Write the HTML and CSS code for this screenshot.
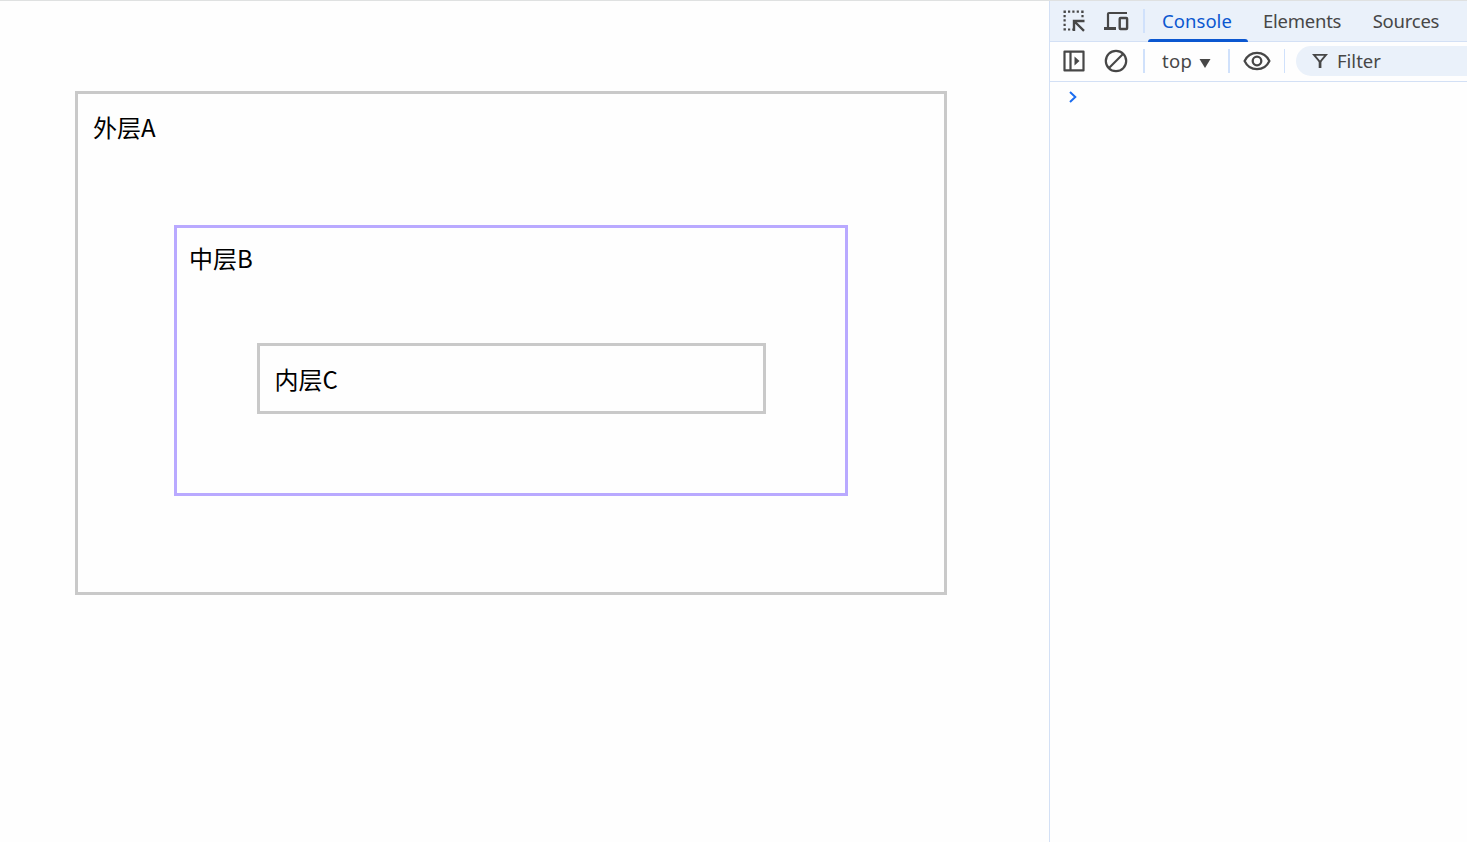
FILE: index.html
```html
<!DOCTYPE html>
<html lang="zh-CN">
<head>
    <meta charset="UTF-8">
    <meta name="viewport" content="width=device-width, initial-scale=1.0">
    <title>外层A 中层B 内层C</title>
    <link rel="stylesheet" href="styles.css">
</head>
<body>
    <!-- Page -->
    <main class="page">
        <div class="box outer">
            <span class="label">外层A</span>
            <div class="box middle">
                <span class="label">中层B</span>
                <div class="box inner">
                    <span class="label">内层C</span>
                </div>
            </div>
        </div>
    </main>

    <!-- Devtools -->
    <aside class="devtools">
        <div class="tabs">
            <svg width="24" height="24" viewBox="0 0 24 24">
                <path d="M1.5 1.5h2.4v2.4H1.5zM6 1.5h2.2v2.2H6zM10.3 1.5h2.2v2.2h-2.2zM14.7 1.5h2.2v2.2h-2.2zM19.2 1.5h2.4v2.4h-2.4zM1.5 6h2.2v2.2H1.5zM1.5 10.3h2.2v2.2H1.5zM1.5 14.7h2.2v2.2H1.5zM1.5 19.2h2.4v2.4H1.5zM6 19.4h2.2v2.2H6zM10.3 19.4h2.2v2.2h-2.2zM19.4 6h2.2v2.2h-2.2z" fill="#474747"/>
                <path d="M12 22V12h10.5M12.500 12.500l9.500 9.300" fill="none" stroke="#474747" stroke-width="2.4"/>
            </svg>
            <svg class="device" width="26" height="24" viewBox="0 0 26 24">
                <path d="M5 19V5q0-1 1-1h18" fill="none" stroke="#474747" stroke-width="2.2"/>
                <path d="M1 18h12v3H1z" fill="#474747"/>
                <rect x="16.700" y="9" width="7.400" height="11" rx=".8" fill="none" stroke="#474747" stroke-width="2.400"/>
            </svg>
            <span class="divider"></span>
            <span class="tab active">Console</span>
            <span class="tab">Elements</span>
            <span class="tab">Sources</span>
        </div>
        <div class="toolbar">
            <svg width="24" height="24" viewBox="0 0 24 24">
                <path d="M2.5 2.6h19v18.8h-19zM8.5 3v18" fill="none" stroke="#474747" stroke-width="2.2" stroke-linejoin="round"/>
                <path d="M12.5 7.5l5 4.5-5 4.5z" fill="#474747"/>
            </svg>
            <svg class="clear" width="24" height="24" viewBox="0 0 24 24">
                <circle cx="12" cy="12" r="10.2" fill="none" stroke="#474747" stroke-width="2.2"/>
                <path d="M5 19L19 5" stroke="#474747" stroke-width="2.2"/>
            </svg>
            <span class="divider"></span>
            <span class="context">top</span>
            <svg class="arrow" width="12" height="9" viewBox="0 0 12 9">
                <path d="M.5 0h11L6 9z" fill="#474747"/>
            </svg>
            <span class="divider after-context"></span>
            <svg class="eye" width="28" height="20" viewBox="0 0 28 20">
                <path d="M1.6 10C4 4.800 8.700 1.800 14 1.800S24 4.800 26.400 10C24 15.200 19.300 18.200 14 18.200S4 15.200 1.600 10z" fill="none" stroke="#474747" stroke-width="2.2"/>
                <circle cx="14" cy="10" r="4.3" fill="none" stroke="#474747" stroke-width="2.3"/>
            </svg>
            <span class="divider thin"></span>
            <div class="filter">
                <svg width="16" height="16" viewBox="0 0 16 16">
                    <path d="M2 1.9h12L8 9z" fill="none" stroke="#474747" stroke-width="1.9"/>
                    <path d="M6.700 8h2.700v7H6.700z" fill="#474747"/>
                </svg>
                <span>Filter</span>
            </div>
        </div>
        <div class="console">
            <svg width="10" height="12" viewBox="0 0 10 12">
                <path d="M2 1l5.300 5L2 11" fill="none" stroke="#1a6cf0" stroke-width="2"/>
            </svg>
        </div>
    </aside>
</body>
</html>
```
FILE: styles.css
```css
* {
    box-sizing: border-box;
}

body {
    margin: 0;
    height: 842px;
    display: flex;
    overflow: hidden;
    border-top: 1px solid #dfe1e1;
    background: #fefefe;
}

/* Nested boxes */
.page {
    width: 1049px;
    padding: 90px 0 0 75px;
    font-family: "Noto Sans CJK SC", sans-serif;
    font-size: 24px;
    line-height: 36px;
    color: #000;
}

.box {
    border: 3px solid #c9c9c9;
}

.label {
    display: block;
}

.outer {
    width: 872px;
    height: 504px;
    padding: 15px 96px 0;
}

.outer > .label {
    margin-left: -81px;
}

.middle {
    height: 271px;
    margin-top: 80px;
    padding: 12px 79px 0 80px;
    border-color: #b9a9ff;
}

.middle > .label {
    margin-left: -68px;
}

.inner {
    height: 71px;
    margin-top: 67px;
    padding: 15px 14.6px;
}

/* Devtools panel */
.devtools {
    flex: 1;
    min-width: 0;
    overflow: hidden;
    border-left: 1px solid #d3e0f5;
    font-family: "Noto Sans", sans-serif;
    font-size: 18.5px;
    color: #474747;
    white-space: nowrap;
}

.tabs,
.toolbar {
    display: flex;
    align-items: center;
    padding-left: 12px;
    border-bottom: 1px solid #d3e0f5;
}

.tabs {
    height: 41px;
    background: #eaf1fa;
}

.toolbar {
    height: 40px;
    padding-bottom: 2px;
}

.tabs > *,
.toolbar > * {
    flex-shrink: 0;
}

.device {
    margin-left: 17px;
}

.clear {
    margin-left: 18px;
}

.divider {
    width: 2px;
    height: 24px;
    margin-left: 14px;
    background: #d0e1fb;
}

.toolbar .divider {
    margin-left: 15px;
}

.tab {
    position: relative;
    height: 40px;
    padding: 0 16.5px 0 15px;
    line-height: 40px;
    letter-spacing: -0.25px;
}

.tab.active {
    width: 100px;
    margin-left: 3px;
    padding: 0 14px;
    color: #0b57d0;
    letter-spacing: 0.05px;
}

.tab.active::after {
    content: "";
    position: absolute;
    left: 0;
    bottom: -1px;
    width: 100%;
    height: 3px;
    border-radius: 3px 3px 0 0;
    background: #0b57d0;
}

.context {
    width: 37px;
    margin-left: 17px;
    letter-spacing: 0.3px;
}

.arrow {
    margin-top: 5px;
}

.toolbar .after-context {
    margin-left: 17px;
}

.eye {
    margin-left: 13px;
}

.toolbar .thin {
    width: 1px;
    margin-left: 13px;
}

.filter {
    display: flex;
    align-items: center;
    width: 190px;
    height: 30px;
    margin-left: 11px;
    padding-left: 16px;
    border-radius: 15px 0 0 15px;
    background: #eaf1fa;
}

.filter span {
    margin-left: 9px;
}

.console {
    display: flex;
    padding: 9px 0 0 18px;
}
```
